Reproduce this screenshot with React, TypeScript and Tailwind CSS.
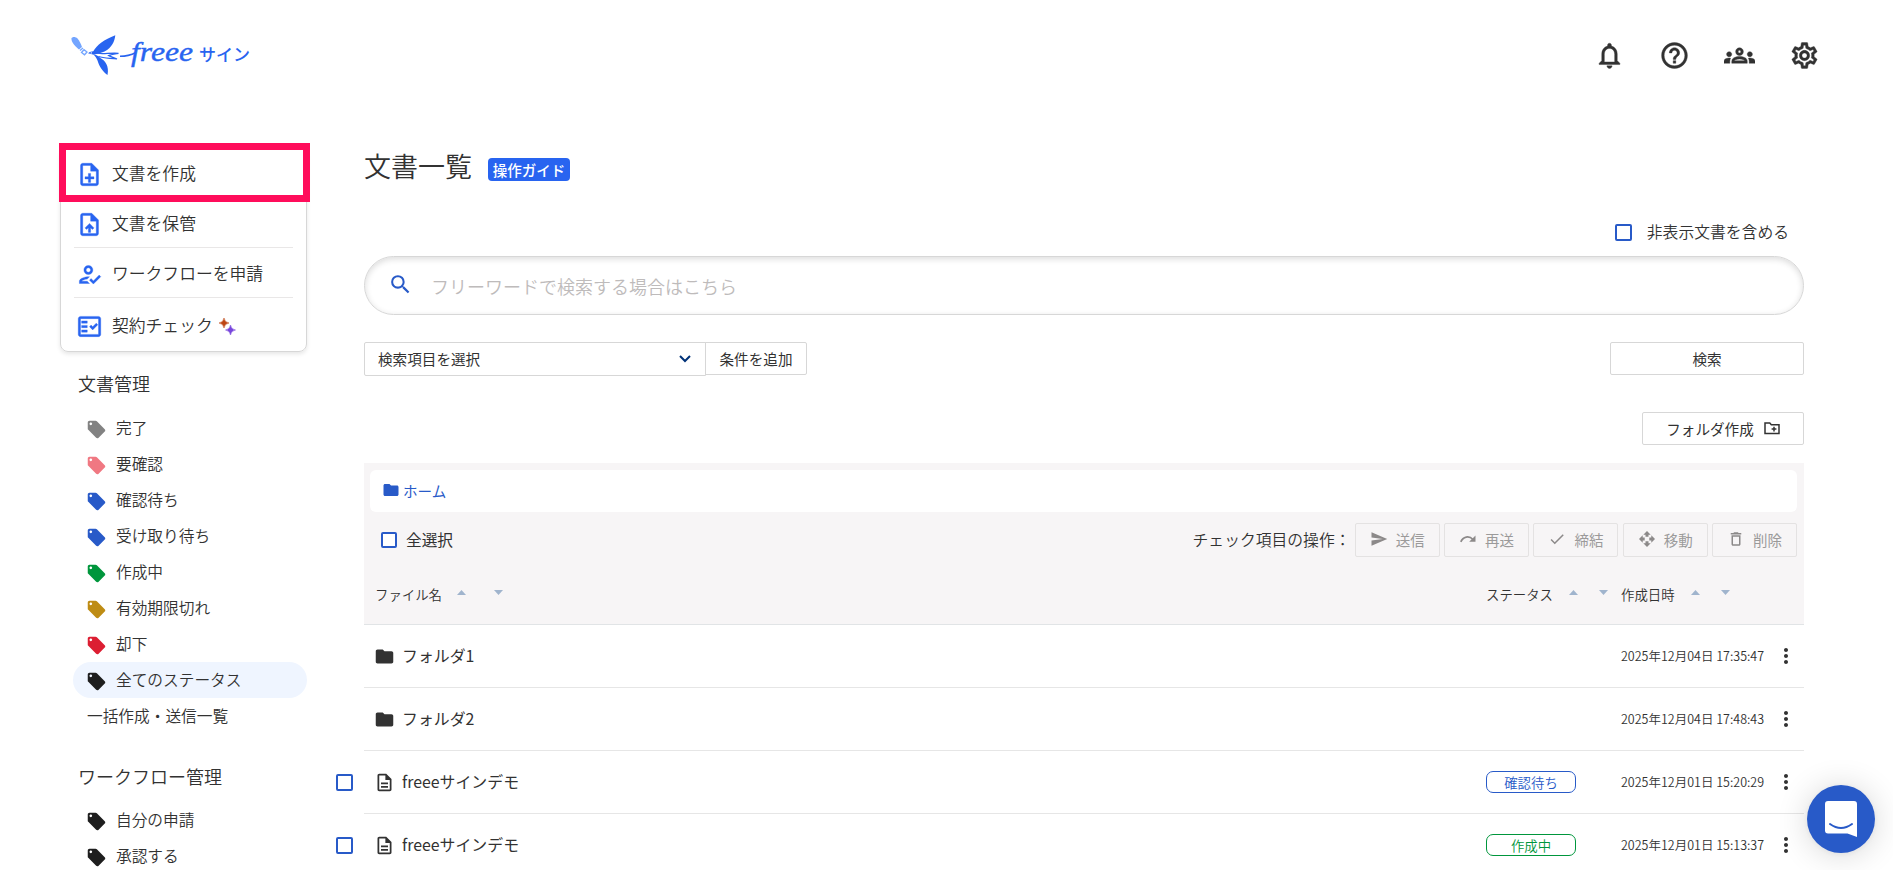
import { useState } from "react";
import type { ReactNode } from "react";
import {
  MdCheck,
  MdDeleteOutline,
  MdFolder,
  MdHelpOutline,
  MdLocalOffer,
  MdMoreVert,
  MdOutlineDescription,
  MdOutlineFactCheck,
  MdOutlineGroups,
  MdOutlineHowToReg,
  MdOutlineNoteAdd,
  MdOutlineNotifications,
  MdOutlineSettings,
  MdOutlineUploadFile,
  MdSearch,
  MdSend,
} from "react-icons/md";

const statuses = [
  { label: "完了", color: "text-[#828282]" },
  { label: "要確認", color: "text-[#f07882]" },
  { label: "確認待ち", color: "text-[#285ac8]" },
  { label: "受け取り待ち", color: "text-[#285ac8]" },
  { label: "作成中", color: "text-[#00963c]" },
  { label: "有効期限切れ", color: "text-[#be8c14]" },
  { label: "却下", color: "text-[#dc1e32]" },
  { label: "全てのステータス", color: "text-[#1e1e1e]" },
];

const workflows = ["自分の申請", "承認する"];

interface Doc {
  type: "folder" | "file";
  name: string;
  status?: string;
  statusClass?: string;
  date: string;
}

const docs: Doc[] = [
  { type: "folder", name: "フォルダ1", date: "2025年12月04日 17:35:47" },
  { type: "folder", name: "フォルダ2", date: "2025年12月04日 17:48:43" },
  {
    type: "file",
    name: "freeeサインデモ",
    status: "確認待ち",
    statusClass: "border-[#285ac8] text-[#285ac8]",
    date: "2025年12月01日 15:20:29",
  },
  {
    type: "file",
    name: "freeeサインデモ",
    status: "作成中",
    statusClass: "border-[#00963c] text-[#00963c]",
    date: "2025年12月01日 15:13:37",
  },
];

function Logo() {
  return (
    <svg width="186" height="44" viewBox="0 0 186 44">
      <path d="M0.500 5.500C1 3.500 4.500 3.500 6.500 5.500C8.500 8 9.500 10 11 14L8 16.500C5 14 0 9.500 0.500 5.500Z" fill="#73a5ff" />
      <path d="M9 17.500l3-2.500M10.500 19.500l2.500-2.800 3 2.300-2.500 2.800z" fill="none" stroke="#73a5ff" strokeWidth="1.300" />
      <g fill="#2864f0">
        <path d="M17 20.300C19 18.500 20.500 18.700 22.300 18.300C26 12 33 6.500 44.300 2.300C43.500 9 41 14.500 33.500 18.500C30 20 25 21.500 22 21.500Z" />
        <path d="M22 21C24 21.500 27 22.500 29 24.700C34 27.500 38.500 33 36.500 42C32 39 28 33 26.500 27.500C25.500 25 24 23 22 21Z" />
      </g>
      <path
        d="M22 19.500C30 22 38 19.500 47.500 20.300C43 21 40 21.500 37.500 22.500C40 24 43 24.500 46 26C40 25 33 25.500 27.500 23.500"
        fill="none"
        stroke="#2864f0"
        strokeWidth="1.200"
      />
      <circle cx="20.300" cy="19.900" r="0.700" fill="#fff" />
      <path d="M49 23.300C54 23.300 60 22 65 19.500" fill="none" stroke="#2864f0" strokeWidth="1.400" />
      <text
        x="60"
        y="28"
        textLength="62"
        lengthAdjust="spacingAndGlyphs"
        className="fill-[#2864f0] font-['Liberation_Serif',serif] text-[28px] font-normal italic"
        stroke="#2864f0"
        strokeWidth="0.4"
      >
        freee
      </text>
      <text x="128" y="27.500" className="fill-[#2864f0] text-[17px] font-medium">
        サイン
      </text>
    </svg>
  );
}

function Sparkles() {
  return (
    <svg width="17" height="17" viewBox="0 0 17 17" className="ml-1.5">
      <path d="M5 0Q5.600 4.400 10 5Q5.600 5.600 5 10Q4.400 5.600 0 5Q4.400 4.400 5 0Z" fill="#be4614" stroke="#be4614" strokeWidth="0.500" />
      <path d="M11.500 7Q12.100 11.400 16.500 12Q12.100 12.600 11.500 17Q10.900 12.600 6.500 12Q10.900 11.400 11.500 7Z" fill="#7846dc" stroke="#7846dc" strokeWidth="0.500" />
    </svg>
  );
}

function Checkbox({ className = "size-[17px]" }: { className?: string }) {
  const [checked, setChecked] = useState(false);
  return (
    <input
      type="checkbox"
      checked={checked}
      onChange={(e) => setChecked(e.target.checked)}
      className={`block shrink-0 appearance-none rounded-[2px] border-2 border-[#285ac8] bg-white checked:bg-[#285ac8] ${className}`}
    />
  );
}

function SortArrows({ className }: { className: string }) {
  return (
    <div className={`-mt-1 flex ${className}`}>
      <svg width="9" height="5" viewBox="0 0 9 5" fill="#a0b4cd">
        <path d="M4.500 0L9 5H0Z" />
      </svg>
      <svg width="9" height="5" viewBox="0 0 9 5" fill="#a0b4cd">
        <path d="M4.500 5L0 0H9Z" />
      </svg>
    </div>
  );
}

function MoveIcon() {
  return (
    <svg width="18" height="18" viewBox="0 0 18 18" fill="currentColor">
      <path d="M9 1l3.700 3.700h-2.200v2h-3v-2H5.300zM9 17l3.700-3.700h-2.200v-2h-3v2H5.300zM1 9l3.700-3.700v2.200h2v3h-2v2.200zM17 9l-3.700-3.700v2.200h-2v3h2v2.200z" />
    </svg>
  );
}

function RedoIcon() {
  return (
    <svg width="18" height="18" viewBox="0 0 18 18">
      <path d="M1.800 11.800C4 6.500 10 5.200 14 9.500" fill="none" stroke="currentColor" strokeWidth="1.700" />
      <path d="M16.500 5.500v6.300h-6.300z" fill="currentColor" />
    </svg>
  );
}

function NavItem({ label, color, active }: { label: string; color: string; active?: boolean }) {
  return (
    <li
      className={`flex h-9 items-center rounded-full pl-[13px] text-[15.700px] ${active ? "bg-[#eff5ff]" : ""}`}
    >
      <MdLocalOffer className={`mt-[3px] size-[21px] ${color}`} />
      <span className="ml-[9px]">{label}</span>
    </li>
  );
}

function MenuItem({ icon, children, last }: { icon: ReactNode; children: ReactNode; last?: boolean }) {
  return (
    <li
      className={`flex items-center pt-[3px] text-[16.800px] ${last ? "h-[53px]" : "h-[50px] border-b border-[#e9e7e7]"}`}
    >
      <span className="flex w-[38px] pl-0.5 text-[27px] text-[#2864f0] [&_path]:stroke-[0.3] [&_path[fill=none]]:stroke-none">
        {icon}
      </span>
      {children}
    </li>
  );
}

function ActionButton({ icon, label }: { icon: ReactNode; label: string }) {
  return (
    <button
      disabled
      className="flex h-[34px] w-[85px] items-center justify-center gap-2 rounded-[2px] border border-[#e4e2e2] text-[14.500px] font-normal text-[#9b9a9a]"
    >
      <span className="-mt-0.5 text-[18px] text-[#8c8989]">{icon}</span>
      {label}
    </button>
  );
}

export default function App() {
  const [keyword, setKeyword] = useState("");

  return (
    <div className="h-[870px] overflow-hidden bg-white font-['Noto_Sans_CJK_JP',sans-serif] font-[350] text-[#323232]">
      <header className="flex h-[110px] items-center justify-between pr-[73px] pl-[71px]">
        <Logo />
        <div className="flex gap-[34px] text-[31px] [&_path]:stroke-[0.3] [&_path[fill=none]]:stroke-none">
          <MdOutlineNotifications />
          <MdHelpOutline />
          <MdOutlineGroups />
          <MdOutlineSettings />
        </div>
      </header>

      <div className="flex">
        <aside className="w-[364px] shrink-0 pt-[38px] pl-[60px]">
          <div className="relative w-[247px] rounded-lg border border-[#d7d7d7] px-[13px] shadow-[0_2px_4px_rgba(0,0,0,0.1)]">
            <ul className="-mt-px">
              <MenuItem icon={<MdOutlineNoteAdd />}>文書を作成</MenuItem>
              <MenuItem icon={<MdOutlineUploadFile />}>文書を保管</MenuItem>
              <MenuItem icon={<MdOutlineHowToReg />}>ワークフローを申請</MenuItem>
              <MenuItem icon={<MdOutlineFactCheck />} last>
                契約チェック
                <Sparkles />
              </MenuItem>
            </ul>
            <div className="absolute -top-1.5 -left-0.5 h-[59px] w-[251px] border-[7px] border-[#ff0d5b]" />
          </div>

          <h2 className="mt-[18px] pl-[18px] text-[18px]">文書管理</h2>
          <ul className="mt-[13px] ml-[13px] w-[234px]">
            {statuses.map((s) => (
              <NavItem key={s.label} label={s.label} color={s.color} active={s.label === "全てのステータス"} />
            ))}
            <li className="flex h-9 items-center pl-[14px] text-[15.700px]">一括作成・送信一覧</li>
          </ul>

          <h2 className="mt-[29px] pl-[18px] text-[18px]">ワークフロー管理</h2>
          <ul className="mt-3 ml-[13px] w-[234px]">
            {workflows.map((w) => (
              <NavItem key={w} label={w} color="text-[#1e1e1e]" />
            ))}
          </ul>
        </aside>

        <main className="w-[1440px] pt-9">
          <div className="flex h-10 items-center">
            <h1 className="text-[27px]">文書一覧</h1>
            <span className="mt-[7px] ml-4 flex h-[23px] w-[82px] items-center justify-center rounded-[4px] bg-[#2864f0] text-[14.500px] font-medium text-white">
              操作ガイド
            </span>
          </div>

          <label className="mt-[34px] flex h-6 items-center justify-end pr-[15px] text-[15.800px]">
            <Checkbox className="mr-[15px] size-[17px]" />
            非表示文書を含める
          </label>

          <div className="mt-3 flex h-[59px] items-center rounded-full border border-[#d7d7d7] pl-[23px] shadow-[inset_0_2px_6px_rgba(0,0,0,0.14)]">
            <MdSearch className="-mt-[3px] size-[25px] text-[#285ac8]" />
            <input
              value={keyword}
              onChange={(e) => setKeyword(e.target.value)}
              placeholder="フリーワードで検索する場合はこちら"
              className="ml-[18px] w-[1200px] pt-0.5 text-[18px] outline-none placeholder:text-[#bebbbb]"
            />
          </div>

          <div className="mt-[27px] flex h-[34px] items-start text-[14.600px] font-normal">
            <button className="flex h-[34px] w-[342px] items-center justify-between rounded-l-[2px] border border-[#d7d7d7] pr-[14px] pl-[13px]">
              検索項目を選択
              <svg width="12" height="8" viewBox="0 0 12 8" fill="none" stroke="#003278" strokeWidth="2">
                <path d="M1 1l5 5 5-5" />
              </svg>
            </button>
            <button className="-ml-px h-[33px] w-[102px] rounded-r-[2px] border border-[#d7d7d7]">条件を追加</button>
            <button className="ml-auto h-[33px] w-[194px] rounded-[2px] border border-[#d7d7d7]">検索</button>
          </div>

          <div className="mt-9 flex justify-end">
            <button className="flex h-[33px] w-[162px] items-center justify-center gap-2.5 rounded-[2px] border border-[#d7d7d7] text-[14.600px] font-normal">
              フォルダ作成
              <svg width="16" height="13" viewBox="0 0 16 13">
                <path d="M1 11.500V1h4.800l1.500 1.700H15v8.800z" fill="none" stroke="#323232" strokeWidth="1.500" />
                <path d="M10 4.700v4.800M7.600 7.100h4.800" stroke="#323232" strokeWidth="1.500" />
              </svg>
            </button>
          </div>

          <section className="mt-[18px]">
            <div className="h-[162px] border-b border-[#e1e4e6] bg-[#f7f5f6] pt-[7px] pr-[7px] pl-1.5">
              <div className="flex h-[42px] items-center rounded-md bg-white pl-3 text-[14.600px] font-normal text-[#285ac8]">
                <MdFolder className="-mt-[3px] mr-[3px] size-[18px]" />
                ホーム
              </div>

              <div className="mt-[11px] flex h-[34px] items-center">
                <label className="flex items-center pl-[11px] text-[15.700px] font-normal">
                  <Checkbox className="mr-[9px] size-4" />
                  全選択
                </label>
                <div className="ml-auto flex items-center gap-[4.300px]">
                  <span className="text-[15.800px]">チェック項目の操作：</span>
                  <ActionButton icon={<MdSend />} label="送信" />
                  <ActionButton icon={<RedoIcon />} label="再送" />
                  <ActionButton icon={<MdCheck />} label="締結" />
                  <ActionButton icon={<MoveIcon />} label="移動" />
                  <ActionButton icon={<MdDeleteOutline />} label="削除" />
                </div>
              </div>

              <div className="mt-[27px] flex items-center pl-[5px] text-[13.400px] leading-5">
                <div className="flex w-[1111px] items-center gap-[15px]">
                  ファイル名
                  <SortArrows className="gap-[28px]" />
                </div>
                <div className="flex w-[135px] items-center gap-4">
                  ステータス
                  <SortArrows className="gap-[21px]" />
                </div>
                <div className="flex items-center gap-4">
                  作成日時
                  <SortArrows className="gap-[21px]" />
                </div>
              </div>
            </div>

            {docs.map((doc, i) => (
              <div key={i} className="-ml-7 flex h-[63px] items-center">
                <div className="w-7 shrink-0">{doc.type === "file" && <Checkbox />}</div>
                <div className="flex h-full flex-1 items-center border-b border-[#e6e6e6] pl-2.5">
                  {doc.type === "folder" ? (
                    <MdFolder className="size-[21px]" />
                  ) : (
                    <MdOutlineDescription className="size-[21px]" />
                  )}
                  <span className="ml-[7px] w-[1084px] text-[15.900px] font-normal">{doc.name}</span>
                  <div className="w-[135px]">
                    {doc.status && (
                      <span
                        className={`flex h-[22px] w-[90px] items-center justify-center rounded-[7px] border text-[13.400px] ${doc.statusClass}`}
                      >
                        {doc.status}
                      </span>
                    )}
                  </div>
                  <span className="w-[153px] text-[12.500px] whitespace-nowrap">{doc.date}</span>
                  <MdMoreVert className="size-6" />
                </div>
              </div>
            ))}
          </section>
        </main>
      </div>

      <button className="fixed right-[18px] bottom-[17px] flex size-[68px] items-center justify-center rounded-full bg-[#285ac8] shadow-[0_2px_32px_rgba(0,0,0,0.16),0_1px_6px_rgba(0,0,0,0.06)]">
        <svg width="32" height="36" viewBox="0 0 32 36">
          <path d="M3 0h26a3 3 0 0 1 3 3v33l-9.500-3.500H3a3 3 0 0 1-3-3V3a3 3 0 0 1 3-3z" fill="#fff" />
          <path d="M5 23q11 8 22 0" fill="none" stroke="#285ac8" strokeWidth="2" strokeLinecap="round" />
        </svg>
      </button>
    </div>
  );
}
